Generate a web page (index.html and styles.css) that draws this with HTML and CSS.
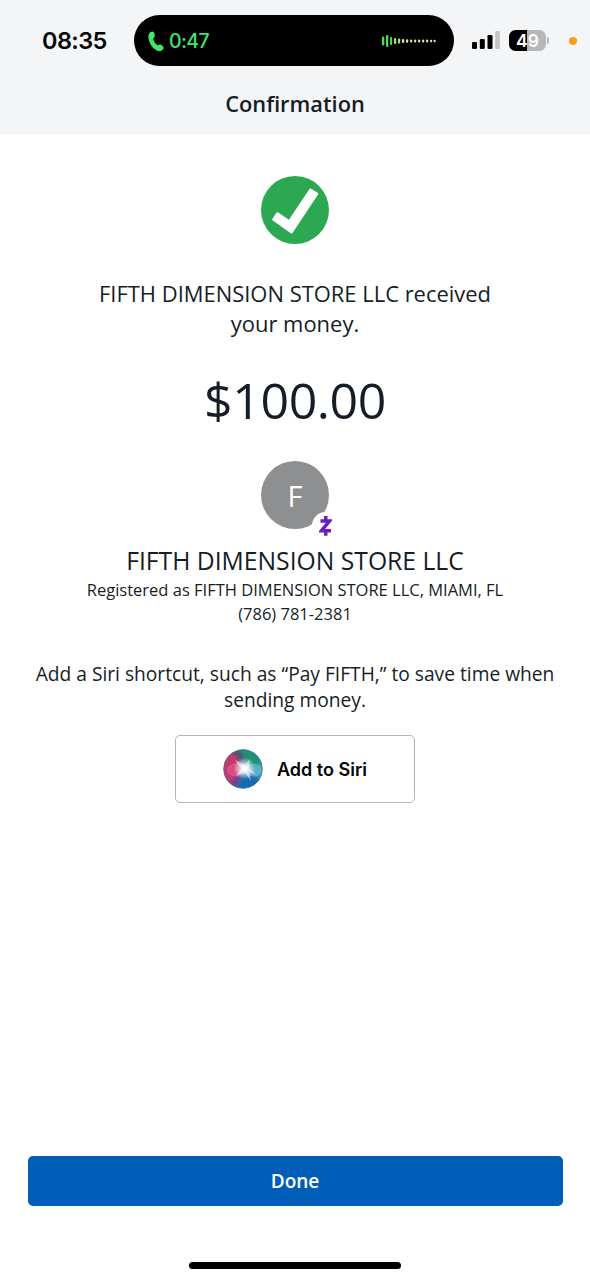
FILE: index.html
```html
<!DOCTYPE html>
<html lang="en">
<head>
<meta charset="utf-8">
<title>Confirmation</title>
<link rel="stylesheet" href="styles.css">
</head>
<body>
<div class="screen">
  <header class="top">
    <div class="status">
      <span class="clock">08:35</span>
      <div class="island">
        <svg class="phone" viewBox="0 0 16 21"><path d="M1.200 2.400C2.200.8 4.600-.2 5.700 1c1 1.300 1.300 3.400 1 4.600C6.500 6.700 5 7 5.200 8.100c.3 2 2.200 4.600 3.900 5.800 1.100.7 1.700-.4 2.900-.3 1.300.2 3 1.500 3.500 2.600.6 1.500-1.100 3.500-2.700 3.900C7.600 21 2.400 14.800 1 9.500.300 6.900.200 4.100 1.200 2.400Z" fill="#3fe667"/></svg>
        <span class="timer">0:47</span>
        <svg class="wave" viewBox="0 0 56 14">
          <g fill="#4ed95d"><rect x="1" y="2.500" width="2.300" height="9" rx="1"/><rect x="5" y="1" width="2.300" height="12" rx="1"/><rect x="9" y="3" width="2.200" height="8" rx="1"/></g>
          <g fill="#a8e77a"><rect x="13" y="4" width="2.200" height="6" rx="1"/><rect x="17" y="4.500" width="2.200" height="5" rx="1"/></g>
          <g fill="#dce99a"><rect x="21" y="5" width="2.200" height="4" rx="1"/><rect x="25" y="5.300" width="2.200" height="3.400" rx="1"/><rect x="29" y="5.500" width="2.200" height="3" rx="1"/><rect x="33" y="5.500" width="2.200" height="3" rx="1"/><rect x="37" y="5.500" width="2.200" height="3" rx="1"/><rect x="41" y="5.500" width="2.200" height="3" rx="1"/><rect x="45" y="5.500" width="2.200" height="3" rx="1"/><rect x="49" y="5.700" width="2.200" height="2.600" rx="1"/><rect x="52.500" y="5.700" width="2.200" height="2.600" rx="1"/></g>
        </svg>
      </div>
      <svg class="signal" viewBox="0 0 28 19"><rect x="0" y="11" width="5" height="7" rx="1.300"/><rect x="7.800" y="8" width="5" height="10" rx="1.300"/><rect x="15.500" y="4" width="5" height="14" rx="1.300"/><rect x="23.200" y="0" width="4.600" height="18" rx="1.300" fill="#c5c6c8"/></svg>
      <div class="battery"><span>49</span></div>
      <i class="battery-cap"></i>
      <i class="mic-dot"></i>
    </div>
    <h1 class="title">Confirmation</h1>
  </header>
  <main class="content">
    <svg class="check" viewBox="0 0 68 68"><circle cx="34" cy="34" r="34" fill="#2da852"/><path d="M16.500 37.500 12.500 43.500 30.500 56.200 56 17.800 49.500 13.800 28.300 45.500Z" fill="#fff" stroke="#fff" stroke-width="2.500" stroke-linejoin="round"/></svg>
    <p class="message">FIFTH DIMENSION STORE LLC received<br>your money.</p>
    <p class="amount">$100.00</p>
    <div class="avatar">F
      <span class="badge"><svg class="zelle" viewBox="0 0 13 20"><path d="M1.500 5h9L2.500 14.700h9.500M6.800 0v5M6.800 14.700v5" fill="none" stroke="#651bc5" stroke-width="3.400"/></svg></span>
    </div>
    <h2 class="name">FIFTH DIMENSION STORE LLC</h2>
    <p class="registered">Registered as FIFTH DIMENSION STORE LLC, MIAMI, FL</p>
    <p class="number">(786) 781-2381</p>
    <p class="hint">Add a Siri shortcut, such as “Pay FIFTH,” to save time when<br>sending money.</p>
    <button class="siri">
      <svg class="orb" viewBox="0 0 40 40">
        <defs>
          <clipPath id="disc"><circle cx="20" cy="20" r="19.500"/></clipPath>
          <radialGradient id="glow"><stop offset="0" stop-color="#fff"/><stop offset=".25" stop-color="#fff" stop-opacity=".85"/><stop offset="1" stop-color="#fff" stop-opacity="0"/></radialGradient>
          <filter id="soft" x="-30%" y="-30%" width="160%" height="160%"><feGaussianBlur stdDeviation="2"/></filter>
          <filter id="ray" x="-30%" y="-30%" width="160%" height="160%"><feGaussianBlur stdDeviation=".7"/></filter>
        </defs>
        <g clip-path="url(#disc)">
          <rect width="40" height="40" fill="#315f86"/>
          <g filter="url(#soft)">
            <path d="M12-2Q22 0 22 19L42 17V-2Z" fill="#239179"/>
            <path d="M-2 6 11 2 19 20 12 37-2 34Z" fill="#c9376d"/>
            <path d="M7 1 18 4 21 16Z" fill="#594d63"/>
            <path d="M20 20 42 15V29L29 31Z" fill="#51a8bf"/>
            <path d="M19 21 38 29 30 42H10Z" fill="#176bb0"/>
            <path d="M18 22 14 40 5 36Z" fill="#6c3c91"/>
          </g>
          <ellipse cx="13" cy="21" rx="8.500" ry="6" fill="#f27aa8" fill-opacity=".35" stroke="#f5a0c0" stroke-opacity=".4" stroke-width=".7"/>
          <ellipse cx="30" cy="21" rx="8" ry="6" fill="#70c5dd" fill-opacity=".35" stroke="#a0deeb" stroke-opacity=".4" stroke-width=".7"/>
          <circle cx="21.500" cy="19.500" r="11" fill="url(#glow)"/>
          <path d="M12 11 22 16 27 10 26 19 34 26 26 23 28 32 22 24 13 26 18 20Z" fill="#fff" opacity=".5" filter="url(#ray)"/>
        </g>
        <circle cx="20" cy="20" r="19" fill="none" stroke="#347b91" stroke-opacity=".5"/>
      </svg>
      <span>Add to Siri</span>
    </button>
  </main>
  <footer class="bottom">
    <button class="done">Done</button>
    <div class="home"></div>
  </footer>
</div>
</body>
</html>
```
FILE: styles.css
```css
* { box-sizing: border-box; }
body { margin: 0; background: #fff; color: #161d26; font-family: "Open Sans", sans-serif; }
p, h1, h2 { margin: 0; font-weight: 400; white-space: nowrap; }
button { font: inherit; padding: 0; }
svg { display: block; flex: none; }
.screen { width: 590px; height: 1280px; display: flex; flex-direction: column; }
.top { height: 134px; background: #f4f5f7; }
.status { height: 81px; padding-left: 42px; display: flex; align-items: center; font-family: Inter, sans-serif; }
.clock { width: 92px; font-size: 23.5px; font-weight: 600; letter-spacing: -0.6px; color: #080808; }
.island { width: 320px; height: 51px; border-radius: 26px; background: #000; display: flex; align-items: center; padding: 0 17px 0 14px; }
.phone { width: 16px; height: 21px; margin-top: 1px; }
.timer { margin-left: 5px; font-size: 19.5px; font-weight: 500; letter-spacing: -0.6px; color: #3fe667; }
.wave { width: 56px; height: 14px; margin-left: auto; }
.signal { width: 28px; height: 19px; margin-left: 18px; }
.battery { width: 37px; height: 21px; margin-left: 9px; border-radius: 6.5px; background: linear-gradient(90deg, #000 49%, #b6b7b9 49%); color: #fff; font-size: 17.5px; line-height: 21px; font-weight: 600; text-align: center; }
.battery-cap { width: 2px; height: 7px; margin-left: 1px; border-radius: 0 2px 2px 0; background: #b6b7b9; }
.mic-dot { width: 8px; height: 8px; margin-left: 20px; border-radius: 50%; background: #f59e16; }
.title { font-size: 21.8px; line-height: 30px; font-weight: 600; text-align: center; margin-top: 8px; }
.content { flex: 1; display: flex; flex-direction: column; align-items: center; padding-top: 42px; text-align: center; }
.check { width: 68px; height: 68px; }
.message { margin-top: 35px; font-size: 21.95px; line-height: 30px; }
.amount { margin-top: 31px; font-size: 50px; line-height: 60px; letter-spacing: -0.4px; }
.avatar { position: relative; width: 68px; height: 68px; margin-top: 31px; border-radius: 50%; background: #8e8f91; color: #fff; font-size: 29px; line-height: 69px; }
.badge { position: absolute; left: 51px; top: 51px; width: 27px; height: 27px; border-radius: 50%; background: #fff; display: flex; align-items: center; justify-content: center; }
.zelle { width: 13px; height: 20px; }
.name { margin-top: 17px; font-size: 24.7px; line-height: 30px; }
.registered { margin-top: 2px; font-size: 16.5px; line-height: 24px; }
.number { font-size: 16.5px; line-height: 24px; }
.hint { margin-top: 35px; font-size: 19.2px; line-height: 26px; }
.siri { width: 240px; height: 68px; margin-top: 22px; border: 1.5px solid #b5b5b5; border-radius: 5px; background: #fff; color: #050505; display: flex; align-items: center; justify-content: center; gap: 14px; font: 600 18px Inter, sans-serif; }
.orb { width: 40px; height: 40px; }
.bottom { height: 124px; display: flex; flex-direction: column; align-items: center; }
.done { width: 535px; height: 50px; border: 0; border-radius: 5px; background: #005eb9; color: #fff; font-size: 19px; font-weight: 600; }
.home { width: 212px; height: 7px; margin-top: 56px; border-radius: 4px; background: #000; }
```
